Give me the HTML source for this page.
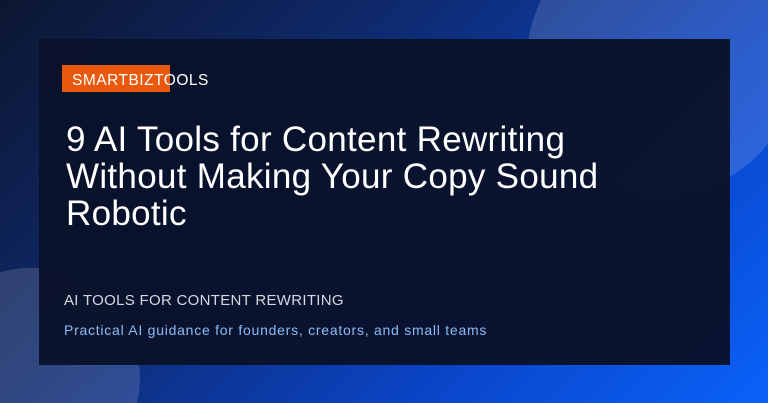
<!DOCTYPE html>
<html><head><meta charset="utf-8"><style>
*{margin:0;padding:0;box-sizing:border-box}
html,body{width:768px;height:403px;overflow:hidden}
body{position:relative;background:linear-gradient(135deg,#0c1630 0%,#0f2a6e 35%,#0a45c8 70%,#0a62fa 100%);font-family:"Liberation Sans",sans-serif}
.wrap{position:absolute;left:0;top:0;width:768px;height:403px;overflow:hidden}
.c1{position:absolute;left:527px;top:-75px;width:270px;height:270px;border-radius:50%;background:rgba(255,255,255,0.14)}
.c2{position:absolute;left:-80px;top:268px;width:220px;height:220px;border-radius:50%;background:rgba(255,255,255,0.14)}
.card{position:absolute;left:39px;top:39px;width:691px;height:326px;background:rgba(9,18,42,0.96)}
.tag{position:absolute;left:62px;top:65px;width:108px;height:27px;background:#e8590c}
.brand{position:absolute;left:72px;top:72px;color:#fff;font-size:15.5px;letter-spacing:0.5px;white-space:nowrap}
h1{position:absolute;left:66px;top:121px;color:#fff;font-weight:normal;font-size:35px;line-height:37px;letter-spacing:0.3px;white-space:nowrap}
.sub{position:absolute;left:64px;top:292px;color:#d4d8e0;font-size:15px;letter-spacing:0.3px;white-space:nowrap}
.tl{position:absolute;left:64px;top:322px;color:#8cbcf5;font-size:14px;letter-spacing:0.75px;white-space:nowrap}
</style></head><body>
<div class="wrap"><div class="c1"></div><div class="c2"></div></div>
<div class="card"></div>
<div class="tag"></div>
<div class="brand">SMARTBIZTOOLS</div>
<h1>9 AI Tools for Content Rewriting<br>Without Making Your Copy Sound<br>Robotic</h1>
<div class="sub">AI TOOLS FOR CONTENT REWRITING</div>
<div class="tl">Practical AI guidance for founders, creators, and small teams</div>
</body></html>
